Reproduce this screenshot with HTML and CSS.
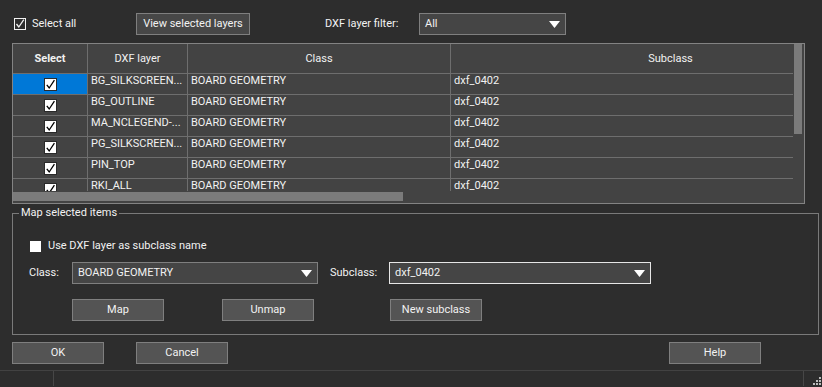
FILE: index.html
```html
<!doctype html>
<html lang="en">
    <head>
        <meta charset="UTF-8" />
        <meta name="viewport" content="width=device-width, initial-scale=1.0" />
        <title>DXF layer mapping</title>
        <link rel="stylesheet" href="styles.css">
    </head>
    <body>
        <svg class="defs" width="0" height="0">
            <symbol id="tick" viewBox="0 0 13 13">
                <rect x="0.5" y="0.5" width="12" height="12" fill="#fff" stroke="#2a2a2a" />
                <path d="M2.8 6.8 L5.2 10 L10.4 2.2" fill="none" stroke="#000" stroke-width="1.3" />
            </symbol>
            <symbol id="arrow" viewBox="0 0 11 7">
                <path d="M0 0 H11 L5.5 7 Z" fill="#fff" />
            </symbol>
        </svg>

        <div class="dialog">
            <div class="top-bar">
                <label class="select-all">
                    <svg class="box-dark" width="12" height="12" viewBox="0 0 12 12">
                        <rect x="0.5" y="0.5" width="11" height="11" fill="none" stroke="#f2f2f2" />
                        <path d="M2.5 6 L4.8 9 L9.8 1.6" fill="none" stroke="#f2f2f2" stroke-width="1.3" />
                    </svg>
                    Select all
                </label>
                <button class="btn view-btn">View selected layers</button>
                <span class="filter-label">DXF layer filter:</span>
                <div class="combo filter-combo">
                    <span>All</span>
                    <svg class="arrow"><use href="#arrow" /></svg>
                </div>
            </div>

            <div class="layer-grid">
                <div class="grid-view">
                    <table>
                        <thead>
                            <tr>
                                <th class="c-select">Select</th>
                                <th class="c-layer">DXF layer</th>
                                <th class="c-class">Class</th>
                                <th class="c-sub">Subclass</th>
                            </tr>
                        </thead>
                        <tbody>
                            <tr>
                                <td class="chk current"><svg><use href="#tick" /></svg></td>
                                <td>BG_SILKSCREEN...</td>
                                <td>BOARD GEOMETRY</td>
                                <td>dxf_0402</td>
                            </tr>
                            <tr>
                                <td class="chk"><svg><use href="#tick" /></svg></td>
                                <td>BG_OUTLINE</td>
                                <td>BOARD GEOMETRY</td>
                                <td>dxf_0402</td>
                            </tr>
                            <tr>
                                <td class="chk"><svg><use href="#tick" /></svg></td>
                                <td>MA_NCLEGEND-...</td>
                                <td>BOARD GEOMETRY</td>
                                <td>dxf_0402</td>
                            </tr>
                            <tr>
                                <td class="chk"><svg><use href="#tick" /></svg></td>
                                <td>PG_SILKSCREEN...</td>
                                <td>BOARD GEOMETRY</td>
                                <td>dxf_0402</td>
                            </tr>
                            <tr>
                                <td class="chk"><svg><use href="#tick" /></svg></td>
                                <td>PIN_TOP</td>
                                <td>BOARD GEOMETRY</td>
                                <td>dxf_0402</td>
                            </tr>
                            <tr>
                                <td class="chk"><svg><use href="#tick" /></svg></td>
                                <td>RKI_ALL</td>
                                <td>BOARD GEOMETRY</td>
                                <td>dxf_0402</td>
                            </tr>
                        </tbody>
                    </table>
                </div>
                <div class="vscroll"><div class="thumb"></div></div>
                <div class="hscroll"><div class="thumb"></div></div>
                <div class="corner"></div>
            </div>

            <fieldset class="map-box">
                <legend>Map selected items</legend>
                <label class="use-layer">
                    <span class="white-box"></span>
                    Use DXF layer as subclass name
                </label>
                <div class="class-row">
                    <span class="field-label">Class:</span>
                    <div class="combo class-combo">
                        <span>BOARD GEOMETRY</span>
                        <svg class="arrow"><use href="#arrow" /></svg>
                    </div>
                    <span class="field-label sub-label">Subclass:</span>
                    <div class="combo sub-combo">
                        <span>dxf_0402</span>
                        <svg class="arrow"><use href="#arrow" /></svg>
                    </div>
                </div>
                <div class="map-buttons">
                    <button class="btn">Map</button>
                    <button class="btn unmap-btn">Unmap</button>
                    <button class="btn new-btn">New subclass</button>
                </div>
            </fieldset>

            <div class="dialog-buttons">
                <button class="btn">OK</button>
                <button class="btn cancel-btn">Cancel</button>
                <button class="btn help-btn">Help</button>
            </div>
        </div>

        <div class="status-bar">
            <div class="status-cell first"></div>
            <div class="status-cell wide"></div>
            <svg class="grip" width="10" height="9" viewBox="0 0 10 9">
                <rect x="7" y="0" width="2" height="2" fill="#bdbdbd" />
                <rect x="4" y="3" width="2" height="2" fill="#bdbdbd" />
                <rect x="7" y="3" width="2" height="2" fill="#bdbdbd" />
                <rect x="1" y="6" width="2" height="2" fill="#bdbdbd" />
                <rect x="4" y="6" width="2" height="2" fill="#bdbdbd" />
                <rect x="7" y="6" width="2" height="2" fill="#bdbdbd" />
            </svg>
        </div>
    </body>
</html>
```

FILE: styles.css
```css
* {
    margin: 0;
    padding: 0;
    box-sizing: border-box;
}
body {
    width: 822px;
    height: 387px;
    overflow: hidden;
    background: #2d2d2d;
    color: #f2f2f2;
    font-family: Roboto, "Noto Sans", sans-serif;
    font-size: 11px;
    line-height: 16px;
}
.defs {
    position: absolute;
    width: 0;
    height: 0;
}

.dialog {
    height: 370px;
    padding: 13px 0 0 12px;
}

/* top row */
.top-bar {
    display: flex;
    align-items: center;
    height: 22px;
}
.select-all {
    display: flex;
    align-items: center;
    gap: 6px;
    width: 124px;
    padding-left: 2px;
}
.btn {
    height: 22px;
    width: 92px;
    background: #545454;
    border: 1px solid #7f7f7f;
    color: #f2f2f2;
    font: inherit;
    text-align: center;
    white-space: nowrap;
}
.view-btn {
    width: 114px;
    background: #474747;
}
.filter-label {
    margin-left: 75px;
    white-space: nowrap;
}
.combo {
    display: flex;
    align-items: center;
    justify-content: space-between;
    height: 22px;
    padding: 0 5px 0 5px;
    background: #454545;
    border: 1px solid #7f7f7f;
}
.combo .arrow {
    width: 11px;
    height: 7px;
}
.filter-combo {
    width: 147px;
    margin-left: auto;
    margin-right: 256px;
}

/* layer table */
.layer-grid {
    display: grid;
    grid-template-columns: 780px 11px;
    grid-template-rows: 147px 12px;
    width: 793px;
    height: 161px;
    margin-top: 8px;
    border: 1px solid #838383;
    background: #434343;
}
.grid-view {
    overflow: hidden;
}
table {
    table-layout: fixed;
    width: 878px;
    border-spacing: 0;
}
th,
td {
    border-right: 1px solid #6e6e6e;
    border-bottom: 1px solid #6e6e6e;
    white-space: nowrap;
    overflow: hidden;
}
th {
    height: 30px;
    font-weight: normal;
    text-align: center;
    vertical-align: middle;
}
th.c-select {
    width: 75px;
    font-weight: bold;
}
th.c-layer {
    width: 100px;
}
th.c-class {
    width: 263px;
}
th.c-sub {
    width: 440px;
}
td {
    height: 21px;
    padding: 0 0 0 3px;
    line-height: 14px;
    vertical-align: top;
}
td.chk {
    padding: 4px 0 0;
}
td.chk svg {
    display: block;
    width: 13px;
    height: 13px;
    margin: 0 auto;
}
td.current {
    background: #0078d7;
}
.vscroll {
    padding-left: 1px;
}
.vscroll .thumb {
    width: 8px;
    height: 90px;
    background: #7b7b7b;
}
.hscroll {
    padding-top: 1px;
}
.hscroll .thumb {
    width: 390px;
    height: 9px;
    background: #7b7b7b;
}

/* map group */
.map-box {
    width: 807px;
    margin-top: 1px;
    padding: 0 0 13px 0;
    border: 1px solid #7a7a7a;
}
.map-box legend {
    margin-left: 6px;
    padding: 0 2px;
}
.use-layer {
    display: flex;
    align-items: center;
    gap: 7px;
    height: 16px;
    margin: 17px 0 0 17px;
}
.white-box {
    width: 11px;
    height: 11px;
    background: #fff;
}
.class-row {
    display: flex;
    align-items: center;
    margin: 8px 0 0 16px;
}
.field-label {
    width: 43px;
}
.class-combo {
    width: 246px;
}
.sub-label {
    width: 59px;
    margin-left: 12px;
}
.sub-combo {
    width: 262px;
    border-color: #e6e6e6;
}
.map-buttons {
    display: flex;
    margin: 15px 0 0 59px;
}
.unmap-btn {
    margin-left: 58px;
}
.new-btn {
    margin-left: 76px;
}

/* bottom */
.dialog-buttons {
    display: flex;
    margin-top: 7px;
}
.cancel-btn {
    margin-left: 32px;
}
.help-btn {
    margin-left: 441px;
}

.status-bar {
    display: flex;
    height: 17px;
    border-top: 1px solid #424242;
}
.status-cell {
    height: 15px;
    border-right: 1px solid #474747;
}
.status-cell.first {
    width: 54px;
}
.status-cell.wide {
    width: 751px;
}
.grip {
    margin: 6px 0 0 8px;
}
```
